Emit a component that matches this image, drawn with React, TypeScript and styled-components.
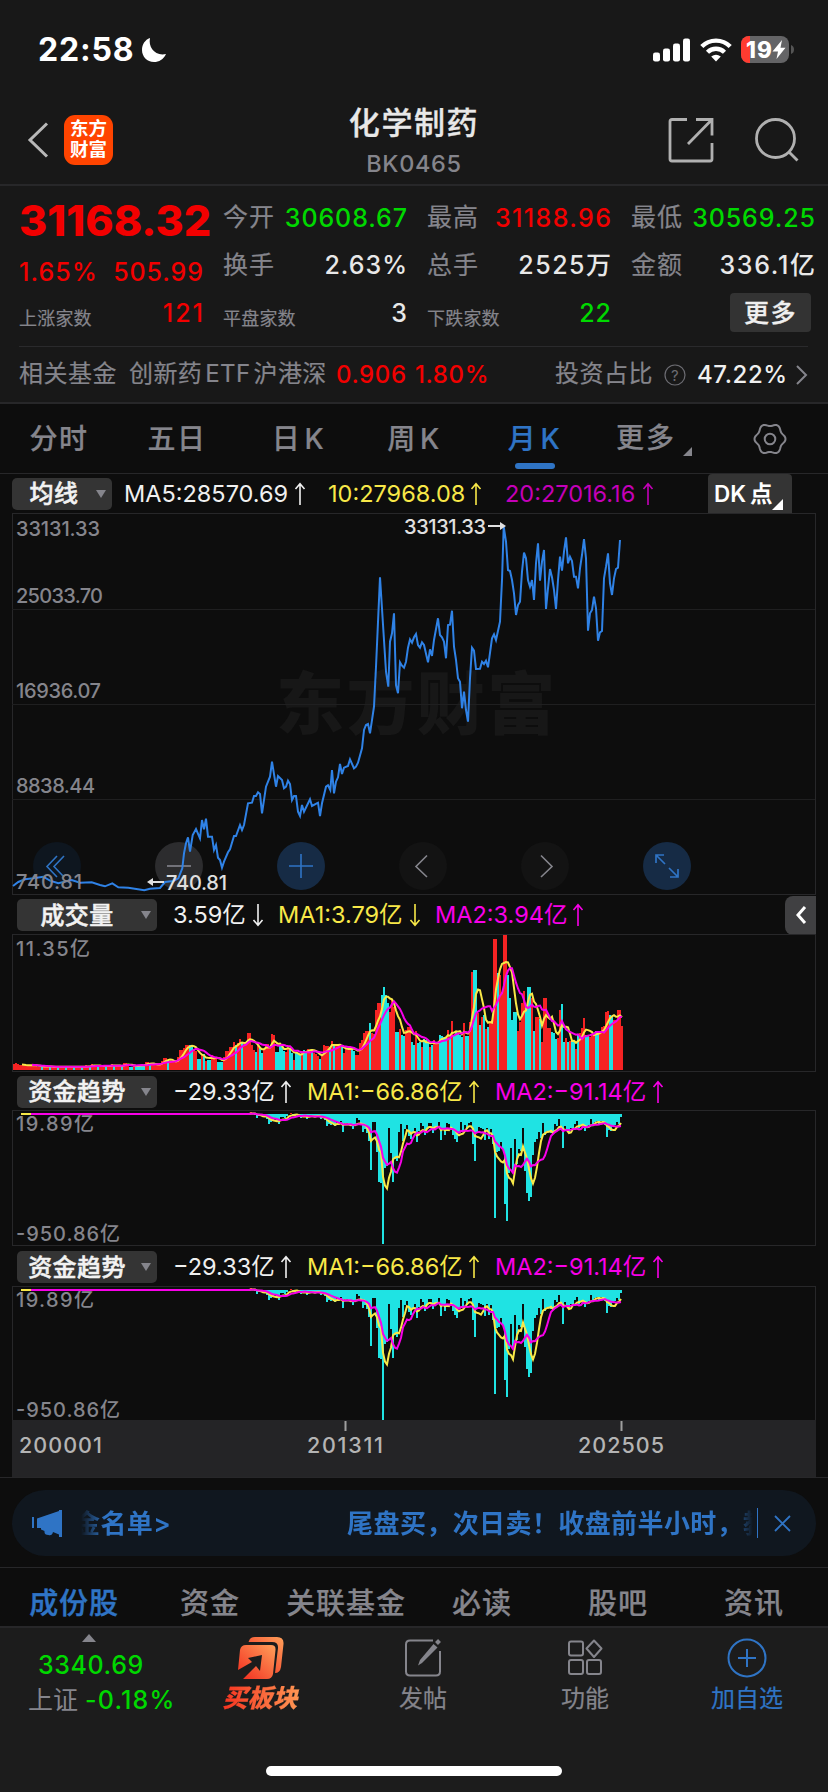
import React from "react";
import styled, { createGlobalStyle } from "styled-components";

const C = {
  grey: "#85858c",
  red: "#f20000",
  green: "#00d800",
  white: "#e8e8e8",
  blue: "#2f74c5",
  yellow: "#f8e848",
  magenta: "#f800e8",
  purple: "#c400b8",
  line: "#272729",
  chip: "#343434",
};

const GlobalStyle = createGlobalStyle`
  * { box-sizing: border-box; }
  body {
    margin: 0;
    background: #0d0d0d;
    font-family: Inter, "Noto Sans CJK SC", sans-serif;
    color: ${C.white};
  }
  svg { display: block; flex: none; }
`;

const Screen = styled.main`
  width: 828px;
  height: 1792px;
  display: flex;
  flex-direction: column;
  background: #0d0d0d;
  overflow: hidden;
  white-space: nowrap;
`;

/* ---------- status bar + header ---------- */

const StatusBar = styled.div`
  height: 96px;
  flex: none;
  background: #181818;
  display: flex;
  align-items: center;
  padding: 3px 33px 0 38px;
`;
const Clock = styled.span`
  font-size: 32px;
  font-weight: 700;
  color: #fff;
  width: 103px;
  letter-spacing: 0.8px;
`;
const StatusIcons = styled.div`
  margin-left: auto;
  display: flex;
  align-items: center;
  gap: 9px;
`;
const Header = styled.header`
  height: 90px;
  flex: none;
  background: #181818;
  border-bottom: 2px solid ${C.line};
  display: grid;
  grid-template-columns: 200px 1fr 200px;
  grid-template-rows: 88px;
  align-items: center;
`;
const HeaderSide = styled.div<{ $end?: boolean }>`
  display: flex;
  align-items: center;
  justify-content: ${(p) => (p.$end ? "flex-end" : "flex-start")};
  padding: ${(p) => (p.$end ? "0 28px 0 0" : "0 0 0 27px")};
  gap: ${(p) => (p.$end ? "40px" : "15px")};
`;
const BrandMark = styled.div`
  width: 49px;
  height: 50px;
  border-radius: 11px;
  background: #ff4400;
  color: #fff;
  font-size: 18.5px;
  font-weight: 700;
  line-height: 21px;
  padding-top: 3px;
  text-align: center;
  white-space: normal;
`;
const Titles = styled.div`
  display: flex;
  flex-direction: column;
  align-items: center;
  padding-top: 6px;
`;
const Title = styled.h1`
  margin: 0;
  font-size: 31px;
  line-height: 42px;
  font-weight: 500;
  letter-spacing: 1.6px;
  -webkit-text-stroke: 0.3px currentColor;
`;
const Code = styled.span`
  font-size: 23.5px;
  line-height: 40px;
  font-weight: 500;
  letter-spacing: 0.7px;
  color: ${C.grey};
`;

/* ---------- quote summary ---------- */

const Quote = styled.section`
  height: 218px;
  flex: none;
  background: #181818;
  border-bottom: 2px solid ${C.line};
  padding: 8px 13px 0 19px;
`;
const QuoteGrid = styled.div`
  height: 152px;
  display: grid;
  grid-template-columns: 184px 184px 184px 184px;
  column-gap: 20px;
`;
const QuoteCol = styled.div<{ $rows: string }>`
  display: grid;
  grid-template-rows: ${(p) => p.$rows};
`;
const QuoteCell = styled.div<{ $inset?: number }>`
  display: flex;
  align-items: center;
  justify-content: space-between;
  padding-right: ${(p) => p.$inset ?? 0}px;
`;
const LastPrice = styled.div`
  width: 184px;
  font-size: 43px;
  font-weight: 800;
  color: ${C.red};
  display: flex;
  align-items: center;
`;
const Label = styled.span<{ $small?: boolean }>`
  font-size: ${(p) => (p.$small ? 18 : 25)}px;
  letter-spacing: ${(p) => (p.$small ? 0.2 : 1)}px;
  color: ${C.grey};
  padding-top: ${(p) => (p.$small ? 7 : 0)}px;
  margin-top: ${(p) => (p.$small ? 0 : -5)}px;
  -webkit-text-stroke: 0.2px currentColor;
`;
const Value = styled.span<{ $color?: string; $ls?: number }>`
  font-size: 25px;
  line-height: 30px;
  font-weight: 500;
  letter-spacing: ${(p) => p.$ls ?? 0.9}px;
  margin-right: ${(p) => -(p.$ls ?? 0.9)}px;
  color: ${(p) => p.$color ?? C.white};
`;
const MoreButton = styled.button`
  width: 81px;
  height: 39px;
  margin: 0 4px 0 auto;
  align-self: center;
  border: 0;
  border-radius: 4px;
  background: #333;
  color: #f0f0f0;
  font: 500 25px Inter, "Noto Sans CJK SC", sans-serif;
  letter-spacing: 1.5px;
  -webkit-text-stroke: 0.3px currentColor;
  padding: 0 0 5px;
`;
const FundRow = styled.div`
  height: 55px;
  border-top: 1px solid #2a2a2c;
  margin-right: 7px;
  padding-top: 2px;
  display: flex;
  align-items: center;
  font-size: 24px;
  line-height: 30px;
  color: ${C.grey};
`;
const FundPart = styled.span<{ $w: number; $ls?: number }>`
  width: ${(p) => p.$w}px;
  margin-top: -3px;
  letter-spacing: ${(p) => p.$ls ?? 0.5}px;
  -webkit-text-stroke: 0.2px currentColor;
`;
const FundValue = styled.span<{ $w: number; $color: string; $indent?: number }>`
  width: ${(p) => p.$w}px;
  padding-left: ${(p) => p.$indent ?? 0}px;
  color: ${(p) => p.$color};
  font-weight: 500;
  letter-spacing: 0.6px;
`;

/* ---------- period tabs ---------- */

const Tabs = styled.nav`
  height: 70px;
  flex: none;
  border-bottom: 1px solid ${C.line};
  display: grid;
  grid-template-columns: 118px 118px 125px 106px 135px 94px 132px;
  align-items: center;
`;
const Tab = styled.div<{ $active?: boolean }>`
  height: 68px;
  display: flex;
  flex-direction: column;
  align-items: center;
  font-size: 28px;
  line-height: 69px;
  font-weight: 500;
  letter-spacing: 1.5px;
  -webkit-text-stroke: 0.2px currentColor;
  color: ${(p) => (p.$active ? C.blue : C.grey)};
  &::after {
    content: "";
    width: 40px;
    height: 6px;
    margin-top: -11px;
    border-radius: 3px;
    background: ${(p) => (p.$active ? C.blue : "transparent")};
  }
`;
const Latin = styled.span`
  margin-left: 3px;
`;
const TabMore = styled.div`
  height: 68px;
  display: flex;
  align-items: center;
  gap: 7px;
  padding-left: 14px;
  font-size: 28px;
  font-weight: 500;
  letter-spacing: 2px;
  line-height: 69px;
  -webkit-text-stroke: 0.2px currentColor;
  color: ${C.grey};
`;
const Corner = styled.i<{ $color: string; $size: number; $drop?: number }>`
  width: 0;
  height: 0;
  align-self: flex-end;
  margin-bottom: ${(p) => p.$drop ?? 0}px;
  border-left: ${(p) => p.$size}px solid transparent;
  border-bottom: ${(p) => p.$size}px solid ${(p) => p.$color};
`;
const GearSlot = styled.div`
  padding-left: 57px;
`;

/* ---------- chart panels ---------- */

const Charts = styled.section`
  flex: none;
  height: 1004px;
  padding: 0 12px;
  border-bottom: 1px solid ${C.line};
`;
const LegendRow = styled.div<{ $h: number; $indent?: number; $top?: number }>`
  height: ${(p) => p.$h}px;
  display: flex;
  align-items: center;
  padding-left: ${(p) => p.$indent ?? 5}px;
  padding-top: ${(p) => p.$top ?? 0}px;
`;
const Chip = styled.div<{ $w: number; $gap: number; $inset?: number }>`
  width: ${(p) => p.$w}px;
  height: 32px;
  margin-right: ${(p) => p.$gap}px;
  border-radius: 5px;
  background: ${C.chip};
  color: #f2f2f2;
  font-size: 24px;
  font-weight: 500;
  letter-spacing: 0.4px;
  line-height: 31px;
  -webkit-text-stroke: 0.5px currentColor;
  display: flex;
  align-items: center;
  flex: none;
  span { flex: 1; text-align: center; padding-right: ${(p) => p.$inset ?? 4}px; }
  &::after {
    content: "";
    margin-right: 6px;
    border: 5px solid transparent;
    border-top: 8px solid #85858c;
    border-bottom: 0;
  }
`;
const LegendItem = styled.div<{ $w: number; $color: string; $text: number }>`
  width: ${(p) => p.$w}px;
  height: 30px;
  flex: none;
  display: flex;
  align-items: center;
  font-size: 23.5px;
  line-height: 30px;
  font-weight: 400;
  color: ${(p) => p.$color};
  span { width: ${(p) => p.$text}px; height: 30px; }
`;
const DkButton = styled.div`
  width: 84px;
  height: 39px;
  margin-left: auto;
  margin-right: 24px;
  border-radius: 4px 4px 0 0;
  background: ${C.chip};
  color: #fff;
  font-size: 22.5px;
  font-weight: 600;
  line-height: 40px;
  display: flex;
  padding: 0 5px 3px 6px;
  span { margin-left: 4px; width: 22px; }
`;
const Collapse = styled.div`
  width: 31px;
  height: 39px;
  margin-left: auto;
  border-radius: 8px 0 0 8px;
  background: #404042;
  display: grid;
  place-items: center;
`;
const Panel = styled.div<{ $h: number }>`
  position: relative;
  height: ${(p) => p.$h}px;
  border: 1px solid ${C.line};
  svg.plot { position: absolute; left: -1px; top: -1px; }
`;
const Watermark = styled.div`
  position: absolute;
  left: 263px;
  top: 145px;
  font-size: 68px;
  line-height: 90px;
  font-weight: 900;
  letter-spacing: 2.4px;
  color: #171717;
`;
const Controls = styled.div`
  position: absolute;
  left: 20px;
  bottom: 4px;
  display: flex;
  gap: 74px;
`;
const Control = styled.div<{ $bg: string }>`
  width: 48px;
  height: 48px;
  border-radius: 50%;
  background: ${(p) => p.$bg};
  display: grid;
  place-items: center;
`;
const Axis = styled.div`
  height: 57px;
  margin-top: -1px;
  position: relative;
  background: #242426;
`;

/* ---------- notice, lower tabs, bottom bar ---------- */

const NoticeWrap = styled.div`
  height: 90px;
  flex: none;
  padding: 12px 12px 0;
  border-bottom: 1px solid ${C.line};
`;
const Notice = styled.div`
  height: 66px;
  border-radius: 33px;
  background: #10171f;
  display: flex;
  align-items: center;
  padding: 0 24px 0 20px;
  color: ${C.blue};
  font-size: 26px;
  font-weight: 600;
`;
const Ticker = styled.div`
  width: 704px;
  flex: none;
  margin: -4px -21px 0 11px;
  display: flex;
  gap: 176px;
  letter-spacing: 0.4px;
  mask-image: linear-gradient(90deg, transparent 7px, #000 31px, #000 657px, transparent 679px);
`;
const NoticeRule = styled.i`
  width: 1px;
  height: 30px;
  background: ${C.blue};
  margin: 0 16px 0 0;
`;
const SectionTabs = styled.nav`
  height: 58px;
  flex: none;
  display: grid;
  grid-template-columns: repeat(6, 136px);
  justify-items: center;
  align-items: center;
  padding: 7px 0 0 6px;
  font-size: 29px;
  font-weight: 500;
  letter-spacing: 0.9px;
  -webkit-text-stroke: 0.2px currentColor;
  color: ${C.grey};
  b { font-weight: 500; color: ${C.blue}; -webkit-text-stroke: 0.4px currentColor; }
`;
const BottomBar = styled.footer`
  flex: 1;
  background: #1c1c1c;
  border-top: 2px solid ${C.line};
  display: flex;
  flex-direction: column;
  align-items: center;
`;
const Actions = styled.div`
  width: 100%;
  height: 138px;
  display: grid;
  grid-template-columns: 180px 162px 162px 162px 162px;
`;
const Action = styled.div<{ $color?: string }>`
  display: flex;
  flex-direction: column;
  align-items: center;
  color: ${(p) => p.$color ?? C.grey};
  font-size: 24px;
  line-height: 34px;
  -webkit-text-stroke: 0.2px currentColor;
  svg { margin: 8px 0 2px; }
`;
const BuyLabel = styled.span`
  font-weight: 900;
  font-style: italic;
  font-size: 25px;
  background: linear-gradient(90deg, #f5301f, #ff9a55);
  background-clip: text;
  color: transparent;
  padding: 0 4px 0 2px;
  margin-top: -1px;
`;
const IndexBox = styled.div`
  width: 180px;
  display: flex;
  flex-direction: column;
  padding-top: 6px;
  padding-left: 28px;
  color: ${C.grey};
  font-size: 25px;
  line-height: 35px;
`;
const IndexValue = styled.span<{ $indent: number; $ls: number }>`
  margin-left: ${(p) => p.$indent}px;
  color: ${C.green};
  font-weight: 500;
  letter-spacing: ${(p) => p.$ls}px;
`;
const IndexName = styled.span`
  display: flex;
`;
const UpMark = styled.i`
  width: 0;
  border: 7.5px solid transparent;
  border-top: 0;
  border-bottom: 8px solid ${C.grey};
  margin: 0 0 6px 54px;
`;
const HomeBar = styled.div`
  width: 296px;
  height: 10px;
  border-radius: 5px;
  background: #fff;
`;

/* ---------- data ---------- */

// Vertices of the monthly closing line, in thirds of a pixel from (0, 500).
const priceRaw =
  "39,1158 55,1146 75,1138 100,1135 130,1130 150,1142 175,1150 215,1140 240,1148 275,1147 300,1155 315,1159 337,1150 355,1162 385,1163 433,1171 450,1166 480,1164 495,1146 520,1143 535,1135 547,1105 552,1060 558,1030 564,1012 570,1055 578,1005 588,987 600,1015 606,960 612,988 618,956 624,1010 636,1010 642,1050 648,1035 654,1073 660,1080 666,1103 672,1085 684,1057 690,1048 702,1008 708,1008 720,975 726,990 732,975 744,910 756,908 762,888 768,888 774,877 780,882 786,940 798,860 810,830 816,785 828,860 834,828 846,840 852,865 858,860 864,842 870,852 876,900 882,888 888,888 894,935 900,948 906,915 912,935 930,898 936,918 954,908 960,948 966,910 978,860 984,856 991,870 996,810 1002,880 1008,845 1014,832 1020,792 1026,822 1032,803 1044,798 1050,778 1062,805 1068,800 1074,788 1086,745 1092,690 1098,675 1104,672 1110,700 1122,620 1128,500 1140,232 1158,515 1165,560 1170,425 1176,400 1182,340 1188,555 1194,580 1200,487 1206,497 1212,503 1218,485 1224,443 1230,418 1236,428 1242,412 1248,402 1254,435 1260,443 1266,427 1272,435 1284,487 1290,448 1296,468 1302,420 1314,355 1320,405 1326,412 1332,425 1338,475 1344,375 1350,374 1356,332 1362,440 1368,480 1374,535 1380,545 1386,625 1392,575 1398,630 1404,665 1410,535 1416,443 1422,452 1428,507 1440,506 1446,485 1452,492 1458,482 1464,502 1476,415 1482,403 1488,420 1500,365 1506,240 1511,80 1518,125 1524,210 1530,213 1536,240 1542,280 1548,345 1554,315 1560,305 1566,215 1572,158 1578,175 1584,240 1590,260 1596,240 1602,300 1608,190 1614,130 1620,242 1626,185 1632,150 1638,327 1644,265 1650,207 1656,232 1662,270 1668,327 1674,240 1680,170 1686,212 1692,155 1698,112 1704,190 1710,170 1716,183 1722,230 1728,230 1734,265 1740,205 1746,165 1752,117 1758,175 1764,392 1770,340 1776,330 1782,290 1788,325 1794,422 1800,397 1806,393 1812,235 1818,200 1824,160 1830,250 1836,285 1842,235 1848,207 1854,203 1860,120";
const pricePoints = priceRaw
  .split(" ")
  .map((p) => {
    const [x, y] = p.split(",").map(Number);
    return `${(x / 3 - 12).toFixed(1)},${(y / 3 - 13).toFixed(1)}`;
  })
  .join(" ");

type Bar = { up: boolean; h: number };

const parseBars = (src: string, base: number): Bar[] =>
  src
    .trim()
    .split(/\s+/)
    .map((t) => ({ up: t[0] === "R", h: (base - Number(t.slice(1))) / 3 }));

const volEarly: Bar[] = Array.from({ length: 54 }, (_, i) => {
  const h = i < 3 ? 6 : i < 12 ? 4.6 : i < 20 ? 3.2 : i < 36 ? 3 : 3.8;
  const bump = i === 39 || i === 49 ? 2.2 : i % 5 === 1 ? 0.8 : 0;
  return { up: i < 13 || i % 4 !== 2, h: h + bump };
});
const volMid = parseBars(
  `C168 R159 R160 R163 C170 C170 R166 C168 C165 C166 C167 C165 R156 R157 C162 R163 R164 R165 R163 R162 R152 R143 R144 C150 R153 R156 R157 R155 R141 R121 R121 R114 R104 R104 C106 C108 R120 R122 C146 C148 R135 C132 R152 C150 C150 R134 R140 R142 C155 C156 C156 R141 R124 R124 R111 R110 R97 C105 R100 R87 C100 R103 R100 R69 R69 R105 R120 C126 R104 C110 C128 R120 R102 R103 R110 R72 R74 C125 C127 C105 C107 C122 R125 R113 C115 C130 R150 C128 C128 C135 R123 C121 C122 R117 R120 C118 R128 R132 R138 C146 R135 R106 R107 R108 C112 R94 C105 R105 R108 R110`,
  180
);
const volLate = parseBars(
  `C350 R368 R358 R360 R348 C350 C362 R376 R375 R338 R330 R308 R304 R304 C280 R308 R312 R240 R220 R218 C196 C170 C196 C220 R245 R207 R230 C305 C306 R297 C316 C318 R300 R292 R292 C337 C345 R303 C340 C335 R350 C328 C330 C340 R350 C345 R330 R335 R335 C316 C318 C322 C322 R300 C326 R273 C318 C302 C308 C316 C320 R280 C318 C318 R275 R127 C121 C121 R250 C286 R260 C255 R298 C292 R275 R270 R28 R28 C130 R135 R187 R15 R15 C136 C203 C270 C245 C245 R303 R275 R220 R184 C225 C170 C170 R205 C303 R262 R262 C268 R337 R205 R205 R293 R293 C306 C308 C328 R325 R240 C223 C337 R325 C336 R333 C333 C333 R357 C311 R310 R293 R265 C315 C318 R322 R312 R310 C304 C308 R312 R290 R288 R247 R244 C256 C260 R270 R270 R241 R241 R288`,
  420
);
const volume = [...volEarly, ...volMid, ...volLate].slice(-305);

const flowLead = Array.from({ length: 119 }, () => 0);
const flowMid = [
  -2, -1, 1, 4, 2, 1, 3, 2, 5, 10, 8, 6, 5, 7, 10, 3, 3, 4, 2, 0, -1, 1, 2, 1, 3, 4, 2, 1, 5, 2, 1, 2, 3, 2, 2, 5, 4,
  6, 12, 10, 11, 9, 12, 8, 10,
];
const flowLate =
  "65 98 70 72 74 76 90 78 55 62 78 98 90 100 125 211 68 68 158 248 252 433 205 200 87 160 248 180 185 97 75 125 88 78 110 118 100 85 128 95 72 80 107 88 70 72 102 88 82 68 122 85 108 72 75 85 107 120 128 100 68 98 78 88 72 68 135 186 100 82 86 90 122 85 120 90 135 355 158 155 128 150 313 365 222 146 215 120 195 148 155 87 215 282 306 293 168 128 118 98 115 72 108 95 97 100 105 75 80 58 92 145 80 90 98 85 88 75 65 85 80 75 95 82 78 58 75 68 64 76 65 68 78 113 93 95 80 78 68 75 54"
    .split(" ")
    .map((v) => (Number(v) - 44) / 3);
const flow = [...flowLead, ...flowMid, ...flowLate];

const average = (v: number[], n: number, toXY: (i: number, m: number) => string) =>
  v
    .map((_, i) => (i < n - 1 ? "" : toXY(i, v.slice(i - n + 1, i + 1).reduce((a, b) => a + b, 0) / n)))
    .filter(Boolean)
    .join(" ");

const gearPoints = Array.from({ length: 72 }, (_, k) => {
  const t = (k * Math.PI) / 36;
  const r = 14.2 + 1.3 * Math.cos(6 * t);
  return `${(17 + r * Math.cos(t)).toFixed(2)},${(17 + r * Math.sin(t)).toFixed(2)}`;
}).join(" ");

/* ---------- pieces ---------- */

const Arrow = ({ down }: { down?: boolean }) => (
  <svg width="12" height="24" viewBox="0 0 12 24" fill="none" stroke="currentColor" strokeWidth="1.6">
    <path d={down ? "M6 1V22M1.5 17L6 22.3L10.5 17" : "M6 23V2M1.5 7L6 1.7L10.5 7"} />
  </svg>
);

const ScaleText = ({ x, y, w, children, fill = C.grey, size = 20 }: any) => (
  <text x={x} y={y} textLength={w} fill={fill} fontSize={size} fontWeight="500">
    {children}
  </text>
);

const PriceChart = () => (
  <Panel $h={382}>
    <Watermark>东方财富</Watermark>
    <svg className="plot" width="804" height="382">
      <g stroke="#1f1f20" strokeWidth="1">
        <path d="M0 96.5H803M0 191.5H803M0 286.5H803" />
      </g>
    </svg>
    <Controls>
      <Control $bg="#0e161f">
        <svg width="24" height="24" viewBox="0 0 24 24" fill="none" stroke={C.blue} strokeWidth="1.6">
          <path d="M12 2L2 12.5L12 23M19 2L9 12.5L19 23" />
        </svg>
      </Control>
      <Control $bg="#2c2c2e">
        <svg width="24" height="24" stroke="#85858c" strokeWidth="1.6"><path d="M0 12H24" /></svg>
      </Control>
      <Control $bg="#162b45">
        <svg width="24" height="24" stroke={C.blue} strokeWidth="1.6"><path d="M0 12H24M12 0V24" /></svg>
      </Control>
      <Control $bg="#131313">
        <svg width="24" height="24" fill="none" stroke="#85858c" strokeWidth="1.6"><path d="M16 1.5L5 12.5L16 23" /></svg>
      </Control>
      <Control $bg="#131313">
        <svg width="24" height="24" fill="none" stroke="#85858c" strokeWidth="1.6"><path d="M8 1.5L19 12.5L8 23" /></svg>
      </Control>
      <Control $bg="#162b45">
        <svg width="24" height="24" fill="none" stroke={C.blue} strokeWidth="1.7">
          <path d="M1 9V1H9M1 1L10 10M23 15V23H15M23 23L14 14" />
        </svg>
      </Control>
    </Controls>
    <svg className="plot" width="804" height="382">
      <polyline points={pricePoints} fill="none" stroke="#2f82e6" strokeWidth="2" />
      <ScaleText x={4} y={22.5} w={84}>33131.33</ScaleText>
      <ScaleText x={4} y={89.5} w={87}>25033.70</ScaleText>
      <ScaleText x={4} y={184.5} w={85}>16936.07</ScaleText>
      <ScaleText x={4} y={280} w={79}>8838.44</ScaleText>
      <ScaleText x={4} y={376} w={66}>740.81</ScaleText>
      <ScaleText x={392} y={21} w={82} fill="#e0e0e0">33131.33</ScaleText>
      <ScaleText x={154} y={376.5} w={61} fill="#e0e0e0">740.81</ScaleText>
      <path d="M476 13H489M152 369H140" stroke="#e0e0e0" strokeWidth="2" />
      <path d="M488 9L494 13L488 17ZM141 365L135 369L141 373Z" fill="#e0e0e0" />
    </svg>
  </Panel>
);

const VolumeChart = () => {
  const h = volume.map((b) => b.h);
  const at = (i: number, m: number) => `${2 + 2 * i},${(136 - m).toFixed(1)}`;
  return (
    <Panel $h={138}>
      <svg className="plot" width="804" height="138">
        <g shapeRendering="crispEdges">
          {volume.map((b, i) => (
            <rect key={i} x={1 + 2 * i} y={136 - b.h} width="2" height={b.h} fill={b.up ? "#f52323" : "#1fe3e3"} />
          ))}
        </g>
        <polyline points={average(h, 5, at)} fill="none" stroke={C.yellow} strokeWidth="2" />
        <polyline points={average(h, 10, at)} fill="none" stroke={C.magenta} strokeWidth="2" />
        <ScaleText x={4} y={21.5} w={74}>11.35亿</ScaleText>
      </svg>
    </Panel>
  );
};

const FlowChart = ({ height }: { height: number }) => {
  const at = (i: number, m: number) => `${1 + 2 * i},${(4 + m).toFixed(1)}`;
  return (
    <Panel $h={height}>
      <svg className="plot" width="804" height={height}>
        <g shapeRendering="crispEdges">
          {flow.map((v, i) =>
            v === 0 ? null : (
              <rect
                key={i}
                x={2 * i}
                y={v < 0 ? 4 + v : 4}
                width="2"
                height={Math.abs(v)}
                fill={v < 0 ? "#f52323" : "#1fe3e3"}
              />
            )
          )}
        </g>
        <ScaleText x={4} y={20.5} w={78}>19.89亿</ScaleText>
        <ScaleText x={4} y={131} w={104}>-950.86亿</ScaleText>
        <polyline points={average(flow, 5, at)} fill="none" stroke={C.yellow} strokeWidth="2" />
        <polyline points={average(flow, 10, at)} fill="none" stroke={C.magenta} strokeWidth="2" />
      </svg>
    </Panel>
  );
};

const FlowLegend = ({ height, top }: { height: number; top: number }) => (
  <LegendRow $h={height} $top={top}>
    <Chip $w={140} $gap={16}><span>资金趋势</span></Chip>
    <LegendItem $w={134} $text={107} $color="#f0f0f0"><span>−29.33亿</span><Arrow /></LegendItem>
    <LegendItem $w={188} $text={161} $color={C.yellow}><span>MA1:−66.86亿</span><Arrow /></LegendItem>
    <LegendItem $w={190} $text={157} $color={C.magenta}><span>MA2:−91.14亿</span><Arrow /></LegendItem>
  </LegendRow>
);

const Pair = ({ l, v, color, small, ls, inset }: any) => (
  <QuoteCell $inset={inset}>
    <Label $small={small}>{l}</Label>
    <Value $color={color} $ls={ls}>{v}</Value>
  </QuoteCell>
);

export default function App() {
  return (
    <Screen>
      <GlobalStyle />
      <StatusBar>
        <Clock>22:58</Clock>
        <svg width="26" height="26" viewBox="0 0 26 26">
          <path d="M9 1C7 10 14 19.5 25 17C22.5 22.5 18 25 13 25C6 25 1 19.500 1 13C1 7.500 4 2.800 9 1Z" fill="#fff" />
        </svg>
        <StatusIcons>
          <svg width="38" height="24" viewBox="0 0 38 24" fill="#fff">
            <rect x="0" y="14.500" width="7" height="9" rx="2.200" />
            <rect x="10" y="10.500" width="7" height="13" rx="2.200" />
            <rect x="20" y="5.500" width="7" height="18" rx="2.200" />
            <rect x="30" y="0.500" width="7" height="23" rx="2.200" />
          </svg>
          <svg width="32" height="24" viewBox="0 0 32 24" fill="none" stroke="#fff" strokeWidth="4.400">
            <path d="M1.800 8.500A20 20 0 0 1 30.200 8.500" />
            <path d="M7.500 14.300A12 12 0 0 1 24.500 14.300" />
            <path d="M16 23.500L11.200 18.600Q16 14.800 20.800 18.600Z" fill="#fff" stroke="none" />
          </svg>
          <svg width="54" height="28" viewBox="0 0 54 28">
            <defs>
              <clipPath id="cell"><rect width="48" height="27" rx="8" /></clipPath>
            </defs>
            <g clipPath="url(#cell)">
              <rect width="48" height="27" fill="#646466" />
              <rect width="9" height="27" fill="#ff3b30" />
            </g>
            <path d="M50 9Q53 10 53 13.500Q53 17 50 18Z" fill="#555" />
            <text x="5" y="21.500" fill="#fff" fontSize="22.500" fontWeight="800" textLength="26">19</text>
            <path d="M41 4L31.500 15.500H37L35.500 23L44.500 11.800H39.500Z" fill="#fff" />
          </svg>
        </StatusIcons>
      </StatusBar>

      <Header>
        <HeaderSide>
          <svg width="22" height="36" viewBox="0 0 22 36" fill="none" stroke="#b8b8b8" strokeWidth="3">
            <path d="M20 1.500L3 18L20 34.500" />
          </svg>
          <BrandMark>东方<br />财富</BrandMark>
        </HeaderSide>
        <Titles>
          <Title>化学制药</Title>
          <Code>BK0465</Code>
        </Titles>
        <HeaderSide $end>
          <svg width="46" height="46" viewBox="0 0 46 46" fill="none" stroke="#b0b0b0" strokeWidth="2.800">
            <path d="M19 2.500H4Q2 2.500 2 4.500V42Q2 44 4 44H42Q44 44 44 42V26" />
            <path d="M28 2.500H44V18.500M43.500 3L20 27" />
          </svg>
          <svg width="46" height="46" viewBox="0 0 46 46" fill="none" stroke="#b0b0b0" strokeWidth="2.800">
            <circle cx="21.500" cy="21.500" r="19" />
            <path d="M35 35L43.500 43.500" />
          </svg>
        </HeaderSide>
      </Header>

      <Quote>
        <QuoteGrid>
          <QuoteCol $rows="52px 52px 30px">
            <LastPrice>31168.32</LastPrice>
            <QuoteCell>
              <Value $color={C.red} $ls={1.1}>1.65%</Value>
              <Value $color={C.red} $ls={0.9}>505.99</Value>
            </QuoteCell>
            <Pair l="上涨家数" v="121" color={C.red} ls={2} small />
          </QuoteCol>
          <QuoteCol $rows="47px 48px 48px">
            <Pair l="今开" v="30608.67" color={C.green} ls={0.9} />
            <Pair l="换手" v="2.63%" ls={1} />
            <Pair l="平盘家数" v="3" small />
          </QuoteCol>
          <QuoteCol $rows="47px 48px 48px">
            <Pair l="最高" v="31188.96" color={C.red} ls={1.4} />
            <Pair l="总手" v="2525万" ls={1.5} />
            <Pair l="下跌家数" v="22" color={C.green} small />
          </QuoteCol>
          <QuoteCol $rows="47px 48px 46px">
            <Pair l="最低" v="30569.25" color={C.green} ls={0.9} />
            <Pair l="金额" v="336.1亿" ls={1.7} />
            <MoreButton>更多</MoreButton>
          </QuoteCol>
        </QuoteGrid>
        <FundRow>
          <FundPart $w={110}>相关基金</FundPart>
          <FundPart $w={207} $ls={0.4}>创新药<Latin>ETF</Latin><Latin>沪港深</Latin></FundPart>
          <FundValue $w={79} $color={C.red}>0.906</FundValue>
          <FundValue $w={140} $color={C.red}>1.80%</FundValue>
          <FundPart $w={109}>投资占比</FundPart>
          <svg width="22" height="22" fill="none" stroke="#6c6c72" strokeWidth="1.200">
            <circle cx="11" cy="11" r="10" />
            <text x="7" y="16.500" fontSize="15" fill="#6c6c72" stroke="none">?</text>
          </svg>
          <FundValue $w={110} $color="#f0f0f0" $indent={11}>47.22%</FundValue>
          <svg width="12" height="20" fill="none" stroke="#85858c" strokeWidth="2"><path d="M1 1L10 10L1 19" /></svg>
        </FundRow>
      </Quote>

      <Tabs>
        <Tab>分时</Tab>
        <Tab>五日</Tab>
        <Tab><span>日<Latin>K</Latin></span></Tab>
        <Tab><span>周<Latin>K</Latin></span></Tab>
        <Tab $active><span>月<Latin>K</Latin></span></Tab>
        <TabMore>更多<Corner $color={C.grey} $size={9} $drop={17} /></TabMore>
        <GearSlot>
          <svg width="34" height="34" viewBox="0 0 34 34" fill="none" stroke={C.grey} strokeWidth="2">
            <polygon points={gearPoints} />
            <circle cx="17" cy="17" r="5.300" />
          </svg>
        </GearSlot>
      </Tabs>

      <Charts>
        <LegendRow $h={39} $indent={0}>
          <Chip $w={100} $gap={12} $inset={0}><span>均线</span></Chip>
          <LegendItem $w={204} $text={170} $color="#f0f0f0"><span>MA5:28570.69</span><Arrow /></LegendItem>
          <LegendItem $w={177} $text={142} $color={C.yellow}><span>10:27968.08</span><Arrow /></LegendItem>
          <LegendItem $w={180} $text={137} $color={C.purple}><span>20:27016.16</span><Arrow /></LegendItem>
          <DkButton>DK<span>点</span><Corner $color="#fff" $size={11} /></DkButton>
        </LegendRow>
        <PriceChart />
        <LegendRow $h={39} $top={1}>
          <Chip $w={140} $gap={16}><span>成交量</span></Chip>
          <LegendItem $w={105} $text={79} $color="#f0f0f0"><span>3.59亿</span><Arrow down /></LegendItem>
          <LegendItem $w={157} $text={131} $color={C.yellow}><span>MA1:3.79亿</span><Arrow down /></LegendItem>
          <LegendItem $w={180} $text={137} $color={C.magenta}><span>MA2:3.94亿</span><Arrow /></LegendItem>
          <Collapse>
            <svg width="12" height="18" fill="none" stroke="#fff" strokeWidth="3"><path d="M10 1L3 9L10 17" /></svg>
          </Collapse>
        </LegendRow>
        <VolumeChart />
        <FlowLegend height={38} top={1} />
        <FlowChart height={136} />
        <FlowLegend height={40} top={2} />
        <FlowChart height={135} />
        <Axis>
          <svg width="804" height="57">
            <path d="M333.500 1V11M609.500 1V11" stroke="#a0a0a0" strokeWidth="2" />
            <ScaleText x={7} y={32.5} w={83} size={21.5} fill="#b4b4b4">200001</ScaleText>
            <ScaleText x={295} y={32.5} w={76} size={21.5} fill="#b4b4b4">201311</ScaleText>
            <ScaleText x={566} y={32.5} w={86} size={21.5} fill="#b4b4b4">202505</ScaleText>
          </svg>
        </Axis>
      </Charts>

      <NoticeWrap>
        <Notice>
          <svg width="31" height="27" viewBox="0 0 31 27" fill={C.blue}>
            <path d="M0 7H2V18H0ZM5 8.500L27 1V0H30V27H27V24.500L21 22Q20 26 16.500 25Q12 25 12.500 21L9 19.500V18H5Z" />
          </svg>
          <Ticker>
            <span>金名单&gt;</span>
            <span>尾盘买，次日卖！收盘前半小时，教</span>
          </Ticker>
          <NoticeRule />
          <svg width="17" height="17" stroke={C.blue} strokeWidth="1.800"><path d="M1 1L16 16M16 1L1 16" /></svg>
        </Notice>
      </NoticeWrap>

      <SectionTabs>
        <b>成份股</b>
        <span>资金</span>
        <span>关联基金</span>
        <span>必读</span>
        <span>股吧</span>
        <span>资讯</span>
      </SectionTabs>

      <BottomBar>
        <Actions>
          <IndexBox>
            <UpMark />
            <IndexValue $indent={10} $ls={0.6}>3340.69</IndexValue>
            <IndexName>上证<IndexValue $indent={7} $ls={1.2}>-0.18%</IndexValue></IndexName>
          </IndexBox>
          <Action>
            <svg width="48" height="44" viewBox="0 0 48 44">
              <defs>
                <linearGradient id="hot" x1="0" y1="1" x2="1" y2="0">
                  <stop offset="0" stopColor="#f22a1e" />
                  <stop offset="1" stopColor="#ffa05a" />
                </linearGradient>
              </defs>
              <path d="M12 5Q13 1 18 1H40Q47 1 46.500 8L44 31Q43 37 38 37L41 12Q41.500 6 35 6H11.500Z" fill="url(#hot)" />
              <path d="M3 14Q4 9 9 9H34Q39 9 38.500 14L36 38Q35 43 30 43H6L19 30L23 35L25 19L11 22L15 26L1 34Z" fill="url(#hot)" />
            </svg>
            <BuyLabel>买板块</BuyLabel>
          </Action>
          <Action>
            <svg width="38" height="44" viewBox="0 0 38 44" fill="none" stroke={C.grey} strokeWidth="2">
              <path d="M29 4.500H6Q2 4.500 2 8.500V35.500Q2 39.500 6 39.500H32Q36 39.500 36 35.500V15" />
              <path d="M32.500 7.500L35.500 4.500" strokeWidth="4" />
              <path d="M29.500 8L33.500 11.500L18 27L14 29.500L16 24Z" fill={C.grey} stroke="none" />
            </svg>
            发帖
          </Action>
          <Action>
            <svg width="36" height="44" viewBox="0 0 36 44" fill="none" stroke={C.grey} strokeWidth="2">
              <rect x="2" y="5.500" width="14" height="14" rx="2" />
              <rect x="2" y="24" width="14" height="14" rx="2" />
              <rect x="20" y="24" width="14" height="14" rx="2" />
              <path d="M27 4.500L34.500 12.500L27 21L19.500 12.500Z" strokeLinejoin="round" />
            </svg>
            功能
          </Action>
          <Action $color={C.blue}>
            <svg width="40" height="44" viewBox="0 0 40 44" fill="none" stroke={C.blue} strokeWidth="2">
              <circle cx="20" cy="22" r="18.500" />
              <path d="M11 22H29M20 13V31" />
            </svg>
            加自选
          </Action>
        </Actions>
        <HomeBar />
      </BottomBar>
    </Screen>
  );
}
